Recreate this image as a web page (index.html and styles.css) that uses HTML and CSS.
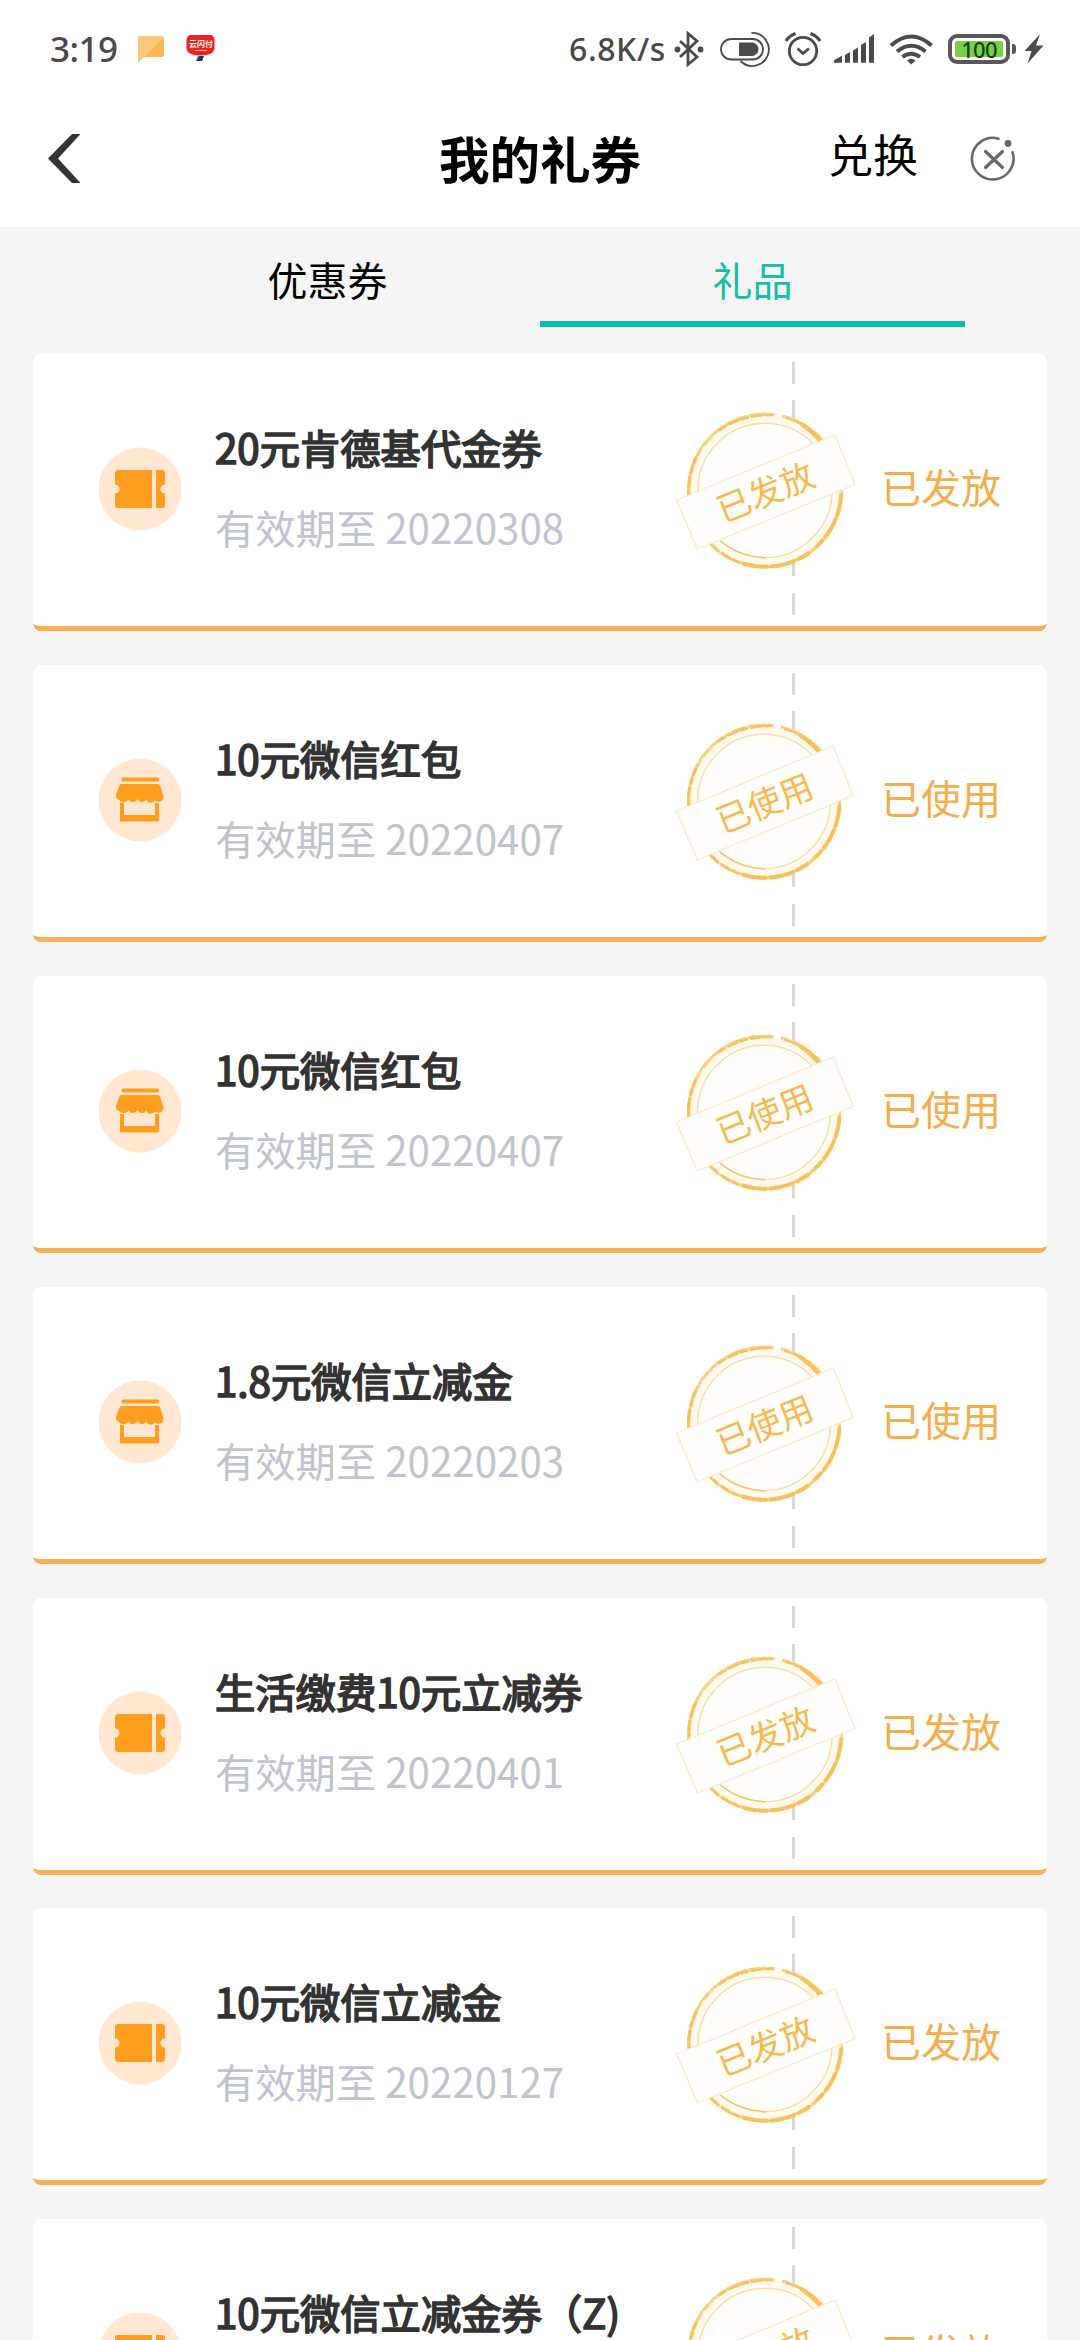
FILE: index.html
```html
<!DOCTYPE html>
<html lang="zh-CN">
<head>
<meta charset="utf-8">
<title>我的礼券</title>
<link rel="stylesheet" href="styles.css">
</head>
<body>
<svg class="defs" width="0" height="0" aria-hidden="true">
  <symbol id="ticket" viewBox="0 0 84 84">
    <circle cx="42" cy="42" r="41.5" fill="#ffe7d1"/>
    <path fill="#ff9d1e" d="M20 23h34v38H20a3 3 0 0 1-3-3v-11.500a4.500 4.500 0 0 0 0-9V26a3 3 0 0 1 3-3zM58 23H64a3 3 0 0 1 3 3v11.500a4.500 4.500 0 0 0 0 9V58a3 3 0 0 1-3 3h-6z"/>
  </symbol>
  <symbol id="shop" viewBox="0 0 84 84">
    <circle cx="42" cy="42" r="41.500" fill="#ffe7d1"/>
    <rect x="23.500" y="19.500" width="37.500" height="4" rx="1.500" fill="#ff9d1e"/>
    <path fill="#ff9d1e" d="M23.500 26h36.500q1.500 0 2 1.500L65.500 38c.500 5-4.500 7.500-9 4.500-2 3-6.500 3-8.500-1-2 3.500-6.500 3.500-8.500-.500-2 4-7 4-9 .500-2.500 3.500-6.500 3.500-9 .500-3-.500-4-3-3.500-5.500L21.500 27.500q.500-1.500 2-1.500z"/>
    <path fill="#ff9d1e" d="M22 45h4v12h31V45h4v17q0 1.500-1.500 1.500h-36Q22 63.500 22 62z"/>
  </symbol>
  <symbol id="seal" viewBox="0 0 190 170">
    <circle cx="95" cy="85.500" r="78" fill="#fffefc"/>
    <g fill="none">
      <circle cx="95" cy="85.500" r="72.500" stroke="#fffaf0" stroke-width="8"/>
      <circle cx="95" cy="85.500" r="76.100" stroke="#fbd995" stroke-width="3.400"/>
      <circle cx="95" cy="85.500" r="76.600" stroke="#f9cd78" stroke-width="2.400" stroke-dasharray="9 3 4 2 15 4 6 1"/>
      <circle cx="95" cy="85.500" r="75" stroke="#fff6e4" stroke-width="1.200" stroke-dasharray="3 9 5 13 2 6"/>
      <circle cx="95" cy="85.500" r="67.200" stroke="#fbdca5" stroke-width="1.500"/>
      <g stroke="#f7c15c" stroke-linecap="round">
        <path stroke-width="4" d="M132 19.500q12 8 19 17.500"/>
        <path stroke-width="2.200" d="M116 13q8 2 16 6.500"/>
        <path stroke-width="4" stroke-dasharray="14 1 5 5" d="M171.300 90A76.300 76.300 0 0 1 147 141"/>
        <path stroke-width="4" stroke-dasharray="12 5 8 3" d="M139 148A76.300 76.300 0 0 1 70 157.500"/>
        <path stroke-width="2.600" stroke-dasharray="5 4 9 5" d="M68 157A76.300 76.300 0 0 1 41 139"/>
        <path stroke-width="3.200" stroke-dasharray="5 4 9 5" d="M19 90A76.300 76.300 0 0 1 26 53"/>
        <path stroke-width="2.400" stroke-dasharray="7 4 10 3" d="M50 25Q70 10.500 103 9.700"/>
        <path stroke-width="1.500" d="M51 136.500Q69 151 95 152.700"/>
      </g>
      <path stroke="#fffdf8" stroke-width="4" d="M105 9.500l7 1.500"/>
    </g>
    <path d="M165 30l20 49.500L27.500 144 6.500 95z" fill="#fffefd" stroke="#fbe9c9" stroke-width="1.300"/>
  </symbol>
</svg>

<div class="screen">
  <div class="status">
    <span class="clock">3:19</span>
    <svg class="note" viewBox="137 34 28 32"><path fill="#fcc67c" d="M140 36h22a2 2 0 0 1 2 2L143 58l-5 5V38a2 2 0 0 1 2-2z"/><path fill="#fdb84f" d="M164 37v18a2 2 0 0 1-2 2h-18z"/></svg>
    <span class="pay">
      <svg viewBox="186 33 30 30"><path fill="#e9231f" d="M191 34h19q4 0 4.500 5v9q-1 6-14 6.500-13-.5-14-6.500v-9q.5-5 4.500-5z"/><path fill="#c22b52" d="M198 55h3l-2 5h-3z"/><path fill="#123a63" d="M200 55h4l-2 5h-5z"/><path stroke="#f9b4ae" d="M195 49.500h12"/></svg>
      <b>云闪付</b>
    </span>
    <span class="speed">6.8K/s</span>
    <svg class="bt" viewBox="674 30 30 36" fill="none" stroke="#4c4a4d" stroke-width="2.800"><path d="M680 40l17 16-9 7.500V32.500l9 7.500-17 16"/><circle cx="677.500" cy="48.500" r="1.500" fill="#4c4a4d"/><circle cx="700.500" cy="48.500" r="1.500" fill="#4c4a4d"/></svg>
    <svg class="toggle" viewBox="719 30 52 36" fill="none" stroke="#4c4a4d" stroke-width="1.800"><rect x="721" y="38" width="42" height="20.500" rx="10.250"/><path fill="#4c4a4d" stroke="none" d="M739 41.500h13.500a6.800 6.800 0 0 1 0 13.500H739z"/><path d="M751.500 32a16.500 16.500 0 1 1-11 28"/></svg>
    <svg class="alarm" viewBox="784 30 38 36" fill="none" stroke="#4c4a4d" stroke-width="2.800"><circle cx="803" cy="50" r="13.700"/><path d="M797.500 47.500l5.500 5 6-5"/><path stroke-width="3.200" d="M786 40q3-5 9.500-7.500M820 40q-3-5-9.500-7.500"/></svg>
    <svg class="signal" viewBox="833 30 42 36" fill="#4c4a4d"><path d="M834 61.800v-2.500l8-4.500v7zM845 54l5-3v10.800h-5zM853 49.500l5-3v15.300h-5zM861 44l5-3v20.800h-5zM869 36.500l5-3.500v28.800h-5z"/></svg>
    <svg class="wifi" viewBox="889 30 46 36" fill="none" stroke="#4c4a4d" stroke-width="4"><path d="M891 44.500q20.500-18 40.500 0M897 50.500q14.500-11.500 28.500 0M902.500 56q8.500-6.500 17.500 0"/><path fill="#4c4a4d" stroke="none" d="M907 59.500q4-3.500 8.500 0l-4.200 4z"/></svg>
    <span class="battery"><span class="charge">100</span></span>
    <svg class="bolt" viewBox="1023 32 22 32" fill="#4c4a4d"><path d="M1040 33l-15.500 17h7l-4 12.500 16-18h-7.500z"/></svg>
  </div>

  <header class="nav">
    <svg class="back" viewBox="46 132 36 54"><path fill="#343434" d="M72 134h8.500L58 158.500 80.500 183H72L48 158.500z"/></svg>
    <h1>我的礼券</h1>
    <div class="actions">
      <span class="redeem">兑换</span>
      <svg class="close" viewBox="969 134 48 48" fill="none" stroke="#686868" stroke-width="2.600"><path d="M998.500 137.700a20.800 20.800 0 1 0 14 13.500" stroke-linecap="round"/><path d="M985.500 150.500l17 16m0-16l-17 16" stroke-width="3.200" stroke-linecap="round"/><circle cx="1008" cy="142.500" r="3.400" fill="#686868" stroke="none"/></svg>
    </div>
  </header>

  <nav class="tabs">
    <a class="tab">优惠券</a>
    <a class="tab active">礼品</a>
  </nav>

  <main class="list">
    <article class="card">
      <svg class="icon"><use href="#ticket"/></svg>
      <div class="info"><h2>20元肯德基代金券</h2><p>有效期至 20220308</p></div>
      <i class="dash"></i><span class="state">已发放</span>
      <div class="stamp"><svg><use href="#seal"/></svg><span>已发放</span></div>
    </article>
    <article class="card">
      <svg class="icon"><use href="#shop"/></svg>
      <div class="info"><h2>10元微信红包</h2><p>有效期至 20220407</p></div>
      <i class="dash"></i><span class="state">已使用</span>
      <div class="stamp used"><svg><use href="#seal"/></svg><span>已使用</span></div>
    </article>
    <article class="card">
      <svg class="icon"><use href="#shop"/></svg>
      <div class="info"><h2>10元微信红包</h2><p>有效期至 20220407</p></div>
      <i class="dash"></i><span class="state">已使用</span>
      <div class="stamp used"><svg><use href="#seal"/></svg><span>已使用</span></div>
    </article>
    <article class="card">
      <svg class="icon"><use href="#shop"/></svg>
      <div class="info"><h2>1.8元微信立减金</h2><p>有效期至 20220203</p></div>
      <i class="dash"></i><span class="state">已使用</span>
      <div class="stamp used"><svg><use href="#seal"/></svg><span>已使用</span></div>
    </article>
    <article class="card">
      <svg class="icon"><use href="#ticket"/></svg>
      <div class="info"><h2>生活缴费10元立减券</h2><p>有效期至 20220401</p></div>
      <i class="dash"></i><span class="state">已发放</span>
      <div class="stamp"><svg><use href="#seal"/></svg><span>已发放</span></div>
    </article>
    <article class="card">
      <svg class="icon"><use href="#ticket"/></svg>
      <div class="info"><h2>10元微信立减金</h2><p>有效期至 20220127</p></div>
      <i class="dash"></i><span class="state">已发放</span>
      <div class="stamp"><svg><use href="#seal"/></svg><span>已发放</span></div>
    </article>
    <article class="card">
      <svg class="icon"><use href="#ticket"/></svg>
      <div class="info"><h2>10元微信立减金券（Z)</h2></div>
      <i class="dash"></i><span class="state">已发放</span>
      <div class="stamp"><svg><use href="#seal"/></svg><span>已发放</span></div>
    </article>
  </main>
</div>
</body>
</html>
```

FILE: styles.css
```css
* { box-sizing: border-box; margin: 0; padding: 0; }

body {
  background: #f5f5f5;
  font-family: "Noto Sans CJK SC", sans-serif;
  color: #000;
}

.defs { position: absolute; }

.screen {
  width: 1080px;
  height: 2340px;
  overflow: hidden;
}

/* status bar */
.status {
  display: flex;
  align-items: center;
  height: 97px;
  padding: 0 35px 0 50px;
  background: #fff;
  color: #4a484b;
  font-family: "Noto Sans", sans-serif;
  font-weight: 500;
}
.status > * { flex: none; }
.clock { width: 87px; font-size: 35px; line-height: 40px; letter-spacing: -0.5px; }
.note { width: 28px; height: 32px; margin-top: 3px; }
.pay { position: relative; width: 30px; height: 30px; margin-left: 21px; }
.pay svg { display: block; width: 30px; height: 30px; }
.pay b {
  position: absolute;
  left: 2px;
  top: 5px;
  width: 26px;
  font: 700 8px/10px "Noto Sans CJK SC", sans-serif;
  color: #fff;
  text-align: center;
  white-space: nowrap;
}
.speed { width: 106px; margin-left: 353px; font-size: 32px; line-height: 40px; letter-spacing: 0.6px; white-space: nowrap; }
.bt { width: 30px; height: 36px; margin-left: -1px; }
.toggle { width: 52px; height: 36px; margin-left: 15px; }
.alarm { width: 38px; height: 36px; margin-left: 13px; }
.signal { width: 42px; height: 36px; margin-left: 11px; }
.wifi { width: 46px; height: 36px; margin-left: 14px; }
.battery {
  position: relative;
  width: 62px;
  height: 30px;
  margin-left: 13px;
  padding: 3px;
  border: 4px solid #59575b;
  border-radius: 9px;
}
.battery::after {
  content: "";
  position: absolute;
  right: -10px;
  top: 6px;
  width: 4px;
  height: 10px;
  border-radius: 0 3px 3px 0;
  background: #59575b;
}
.charge {
  display: block;
  height: 16px;
  border-radius: 2px;
  background: #77d243;
  color: #14420c;
  font-size: 22px;
  line-height: 16px;
  text-align: center;
  letter-spacing: -0.8px;
}
.bolt { width: 22px; height: 32px; margin-left: 13px; }

/* title bar */
.nav {
  display: grid;
  grid-template-columns: 1fr auto 1fr;
  align-items: center;
  height: 130px;
  padding: 0 63px 7px;
  background: #fff;
}
.back { width: 36px; height: 54px; margin-left: -17px; }
.nav h1 { padding-bottom: 4px; font-size: 50.5px; font-weight: 700; line-height: 60px; }
.actions { display: flex; justify-content: flex-end; align-items: center; gap: 51px; }
.redeem { font-size: 45px; line-height: 56px; padding-bottom: 9px; }
.close { width: 48px; height: 48px; }

/* tabs */
.tabs {
  display: flex;
  height: 127px;
  padding: 0 115px;
}
.tab {
  width: 425px;
  height: 100px;
  padding-top: 22px;
  border-bottom: 6px solid transparent;
  font-size: 40px;
  line-height: 60px;
  text-align: center;
}
.tab.active { color: #15bea4; border-color: #0fbea6; }

/* coupon list */
.list {
  display: flex;
  flex-direction: column;
  gap: 33.9px;
  padding: 0 33px;
}
.card {
  position: relative;
  display: flex;
  flex: none;
  align-items: center;
  height: 277px;
  padding: 0 46px 2px 65px;
  border-bottom: 5px solid #f6b156;
  border-radius: 8px;
  background: #fff;
}
.icon { flex: none; width: 84px; height: 84px; }
.info { flex: 1; height: 144px; margin-left: 33px; white-space: nowrap; }
.info h2 {
  font-size: 40.3px;
  font-weight: 400;
  line-height: 60px;
  color: #333;
  -webkit-text-stroke: 1.7px #333;
}
.info p { margin-top: 20px; font-size: 40.3px; line-height: 60px; color: #c0c4cf; }
.dash {
  width: 3px;
  height: 254px;
  margin-right: 86px;
  background: repeating-linear-gradient(#d8d8dc 0 22px, transparent 22px 38.45px);
}
.state { padding-bottom: 6px; font-size: 40px; line-height: 60px; color: #f3ae4e; }

/* the seal lies over the tear line */
.stamp {
  position: absolute;
  left: 637px;
  top: 51px;
  display: grid;
  place-items: center;
  width: 190px;
  height: 170px;
}
.stamp > * { grid-area: 1 / 1; }
.stamp svg { width: 190px; height: 170px; }
.stamp span {
  font-size: 34px;
  line-height: 40px;
  color: #f5b94f;
  transform: translateY(1px) rotate(-22deg);
}
.stamp.used { transform: translateX(-1px) scale(0.99, 1); }
```
